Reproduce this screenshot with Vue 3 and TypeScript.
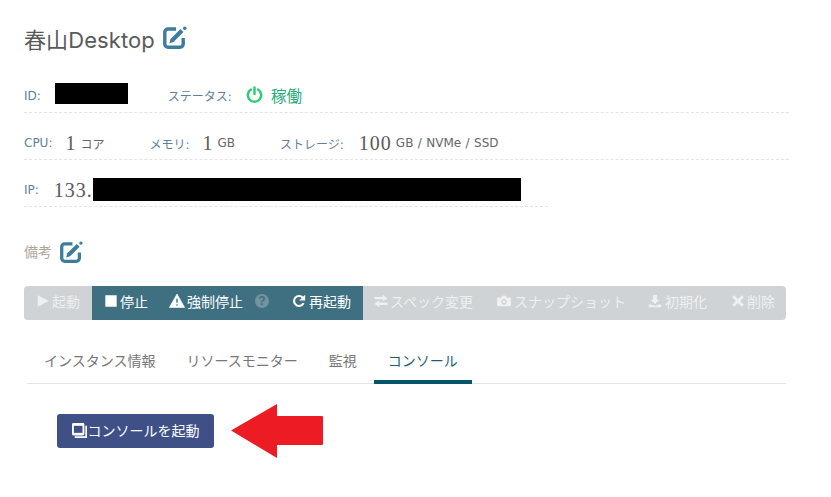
<script setup lang="ts">
interface Action {
  label: string;
  icon: string;
  active: boolean;
  help?: boolean;
}

const actions: Action[] = [
  { label: '起動', icon: 'play', active: false },
  { label: '停止', icon: 'stop', active: true },
  { label: '強制停止', icon: 'warn', active: true, help: true },
  { label: '再起動', icon: 'redo', active: true },
  { label: 'スペック変更', icon: 'swap', active: false },
  { label: 'スナップショット', icon: 'camera', active: false },
  { label: '初期化', icon: 'download', active: false },
  { label: '削除', icon: 'times', active: false },
];

const tabs = ['インスタンス情報', 'リソースモニター', '監視', 'コンソール'];
</script>

<template>
  <div class="page">
    <h1 class="title">
      春山Desktop
      <svg class="edit" viewBox="0 0 24 24">
        <path d="M13 3H5A3.200 3.200 0 0 0 1.800 6.200V18A3.200 3.200 0 0 0 5 21.200H17A3.200 3.200 0 0 0 20.200 18V12" fill="none" stroke="#3d7c9c" stroke-width="3.400" />
        <path d="M6.500 17.200l1-4.300L17.500 3l3 3-10 10z" fill="#3d7c9c" />
        <circle cx="21.800" cy="2.200" r="1.800" fill="#3d7c9c" />
      </svg>
    </h1>

    <div class="row row-id">
      <span class="label">ID:</span>
      <span class="mask mask-id"></span>
      <span class="label status-label">ステータス:</span>
      <svg class="power" viewBox="0 0 18 18">
        <path d="M5.200 3.800a7 7 0 1 0 7.600 0" fill="none" stroke="#2ecc71" stroke-width="2.600" stroke-linecap="round" />
        <path d="M9 1.500v7" fill="none" stroke="#2ecc71" stroke-width="2.600" stroke-linecap="round" />
      </svg>
      <span class="status">稼働</span>
    </div>

    <div class="row row-spec">
      <span class="label">CPU:</span><span class="num n-cpu">1</span><span class="unit">コア</span>
      <span class="label l-mem">メモリ:</span><span class="num n-mem">1</span><span class="unit">GB</span>
      <span class="label l-sto">ストレージ:</span><span class="num n-sto">100</span><span class="unit">GB / NVMe / SSD</span>
    </div>

    <div class="row row-ip">
      <span class="label">IP:</span><span class="num n-ip">133.</span><span class="mask mask-ip"></span>
    </div>

    <div class="memo">
      <span>備考</span>
      <svg class="edit" viewBox="0 0 24 24">
        <path d="M13 3H5A3.200 3.200 0 0 0 1.800 6.200V18A3.200 3.200 0 0 0 5 21.200H17A3.200 3.200 0 0 0 20.200 18V12" fill="none" stroke="#3d7c9c" stroke-width="3.400" />
        <path d="M6.500 17.200l1-4.300L17.500 3l3 3-10 10z" fill="#3d7c9c" />
        <circle cx="21.800" cy="2.200" r="1.800" fill="#3d7c9c" />
      </svg>
    </div>

    <div class="toolbar">
      <div
        v-for="a in actions"
        :key="a.label"
        class="action"
        :class="[{ on: a.active }, 'a-' + a.icon]"
      >
        <svg class="ico" viewBox="0 0 16 16" fill="currentColor">
          <path v-if="a.icon === 'play'" d="M2 1.500l12.500 6.500L2 14.500z" />
          <path v-else-if="a.icon === 'stop'" d="M1.500 1.500h13v13h-13z" />
          <path v-else-if="a.icon === 'warn'" fill-rule="evenodd" stroke="currentColor" stroke-width=".6" stroke-linejoin="round" d="M8 1l7.700 13.500H.3zM7 5.500v4.500h2V5.500zM7 11v2h2v-2z" />
          <path v-else-if="a.icon === 'redo'" fill="none" stroke="currentColor" stroke-width="2.400" d="M13.200 10.400A5.700 5.700 0 1 1 12.400 4.300" />
          <path v-if="a.icon === 'redo'" d="M15 .8v6.700H8.300z" />
          <path v-else-if="a.icon === 'swap'" d="M.5 3.300h9.500V.8L15.500 5 10 8.200V6H.5zM15.500 9.800H6V7.500L.5 11 6 15v-2.500h9.500z" />
          <path v-else-if="a.icon === 'camera'" fill-rule="evenodd" d="M1.500 4H5l1-2h4l1 2h3.500A1.500 1.500 0 0 1 16 5.500v7a1.500 1.500 0 0 1-1.500 1.500h-13A1.500 1.500 0 0 1 0 12.500v-7A1.500 1.500 0 0 1 1.500 4zM8 6a3 3 0 1 0 0 6 3 3 0 0 0 0-6zm0 1.500a1.500 1.500 0 1 1 0 3 1.500 1.500 0 0 1 0-3z" />
          <path v-else-if="a.icon === 'download'" d="M5.800 1h4.400v5.500h3L8 11.500l-5.200-5h3zM.8 12h3.700l1.500 1.200h4l1.500-1.200h3.700v3H.8z" />
          <path v-else-if="a.icon === 'times'" d="M3.700 1.300L8 5.600l4.300-4.300 2.400 2.400L10.400 8l4.300 4.300-2.400 2.400L8 10.400l-4.300 4.300-2.400-2.400L5.600 8 1.300 3.700z" />
        </svg>
        <span>{{ a.label }}</span>
        <svg v-if="a.help" class="help" viewBox="0 0 14 14">
          <circle cx="7" cy="7" r="7" fill="#74929f" />
          <text x="7" y="11" text-anchor="middle" class="help-q">?</text>
        </svg>
      </div>
    </div>

    <div class="tabs">
      <div v-for="t in tabs" :key="t" class="tab" :class="{ current: t === 'コンソール' }">{{ t }}</div>
    </div>

    <div class="console">
      <button class="start">
        <svg class="copy" viewBox="0 0 16 16">
          <rect x="0" y="0" width="13.200" height="13.200" rx="1.500" fill="#fff" />
          <rect x="2" y="3" width="9.200" height="7.500" fill="#3f5087" />
          <path d="M14.200 3H16v13H3v-1.800h11.200z" fill="#fff" />
        </svg>
        <span>コンソールを起動</span>
      </button>
      <svg class="arrow" viewBox="0 0 92 54">
        <path d="M0 26.500L46 0v12h45a1 1 0 0 1 1 1v27a1 1 0 0 1-1 1H46v13z" fill="#ed1c24" />
      </svg>
    </div>
  </div>
</template>

<style>
html, body { margin: 0; background: #fff; }
</style>

<style scoped>
.page {
  position: relative;
  width: 831px;
  height: 497px;
  overflow: hidden;
  box-sizing: border-box;
  padding: 21px 45px 0 24px;
  font-family: "DejaVu Sans", "Noto Sans CJK JP", sans-serif;
  color: #555;
}
.title {
  display: flex;
  align-items: center;
  margin: 0;
  height: 33px;
  font-size: 22px;
  font-weight: 400;
  letter-spacing: 0.1px;
  color: #5a5a5a;
  font-family: "Inter", "Noto Sans CJK JP", sans-serif;
}
.title .edit { margin-left: 8px; }
.edit { width: 24px; height: 24px; }
.row {
  display: flex;
  align-items: center;
  border-bottom: 1px dashed #e4e4e4;
  box-sizing: border-box;
  height: 47px;
  margin-right: -3px;
  padding-top: 14px;
  font-size: 12px;
}
.row-id { margin-top: 5px; height: 54px; padding-top: 20px; }
.row-ip { width: 524px; margin-right: 0; }
.label { color: #5f7f99; font-size: 12px; }
.mask { background: #000; display: block; }
.mask-id { width: 73px; height: 21px; margin-left: 14px; margin-top: -5px; }
.status-label { margin-left: 40px; }
.power { width: 17px; height: 17px; margin-left: 14px; margin-top: -2px; flex: none; }
.status { color: #2aa97c; font-size: 15.500px; margin-left: 8px; margin-top: -2px; }
.num {
  font-family: "Liberation Serif", serif;
  color: #5a5a5a;
  font-size: 20px;
  letter-spacing: 1px;
  line-height: 1;
}
.unit { color: #666; font-size: 12px; word-spacing: 0.6px; }
.n-cpu { margin-left: 13px; margin-right: 4px; }
.l-mem { margin-left: 45px; }
.n-mem { margin-left: 13px; margin-right: 4px; }
.l-sto { margin-left: 45px; }
.n-sto { margin-left: 15px; margin-right: 4px; }
.n-ip { margin-left: 15px; }
.mask-ip { width: 428px; height: 23px; margin-top: -1px; }
.memo {
  display: flex;
  align-items: center;
  gap: 8px;
  margin-top: 29px;
  height: 30px;
  font-size: 14px;
  color: #b3a79c;
}
.memo .edit { width: 23px; height: 23px; margin-top: 2px; }
.toolbar {
  display: flex;
  height: 34px;
  margin-top: 20px;
  background: #cfd3d6;
  border-radius: 4px;
  overflow: hidden;
  font-family: "Noto Sans CJK JP", sans-serif;
}
.action {
  display: flex;
  align-items: center;
  color: #eef0f1;
  font-size: 14px;
  white-space: nowrap;
  box-sizing: border-box;
  padding-left: 12px;
  padding-bottom: 5px;
  gap: 2px;
}
.action.on { background: #3e7082; color: #fff; }
.ico { width: 14px; height: 14px; flex: none; }
.a-play { width: 68px; }
.a-stop { width: 65px; }
.a-warn { width: 123px; padding-left: 12px; gap: 2px; }
.a-warn .ico { width: 16px; height: 16px; }
.a-redo { width: 83px; padding-left: 12px; gap: 3px; }
.a-swap { width: 123px; padding-left: 11px; gap: 2px; }
.a-camera { width: 151px; padding-left: 11px; gap: 3px; }
.a-download { width: 83px; padding-left: 11px; gap: 3px; }
.a-times { flex: 1; padding-left: 11px; gap: 2px; }
.help { width: 14px; height: 14px; margin-left: 10px; }
.help-q { fill: #3e7082; font-size: 12px; font-weight: 700; font-family: "Liberation Sans", sans-serif; }
.tabs {
  display: flex;
  gap: 3px;
  margin-top: 21px;
  margin-left: 3px;
  padding-left: 3px;
  height: 43px;
  box-sizing: border-box;
  border-bottom: 1px solid #e4e4e4;
  font-family: "Noto Sans CJK JP", sans-serif;
}
.tab {
  box-sizing: border-box;
  height: 43px;
  padding: 0 14px;
  line-height: 39px;
  font-size: 14px;
  color: #777;
}
.tab.current {
  color: #1f5f72;
  border-bottom: 4px solid #05566b;
}
.console { padding: 30px 0 0 33px; }
.start {
  display: flex;
  align-items: center;
  justify-content: center;
  gap: 1px;
  width: 157px;
  height: 34px;
  padding: 0 0 2px;
  border: none;
  border-radius: 3px;
  background: #3f5087;
  color: #fff;
  font-family: "Noto Sans CJK JP", sans-serif;
  font-size: 14px;
}
.copy { width: 15px; height: 15px; }
.arrow {
  position: absolute;
  left: 231px;
  top: 404px;
  width: 92px;
  height: 54px;
}
</style>
